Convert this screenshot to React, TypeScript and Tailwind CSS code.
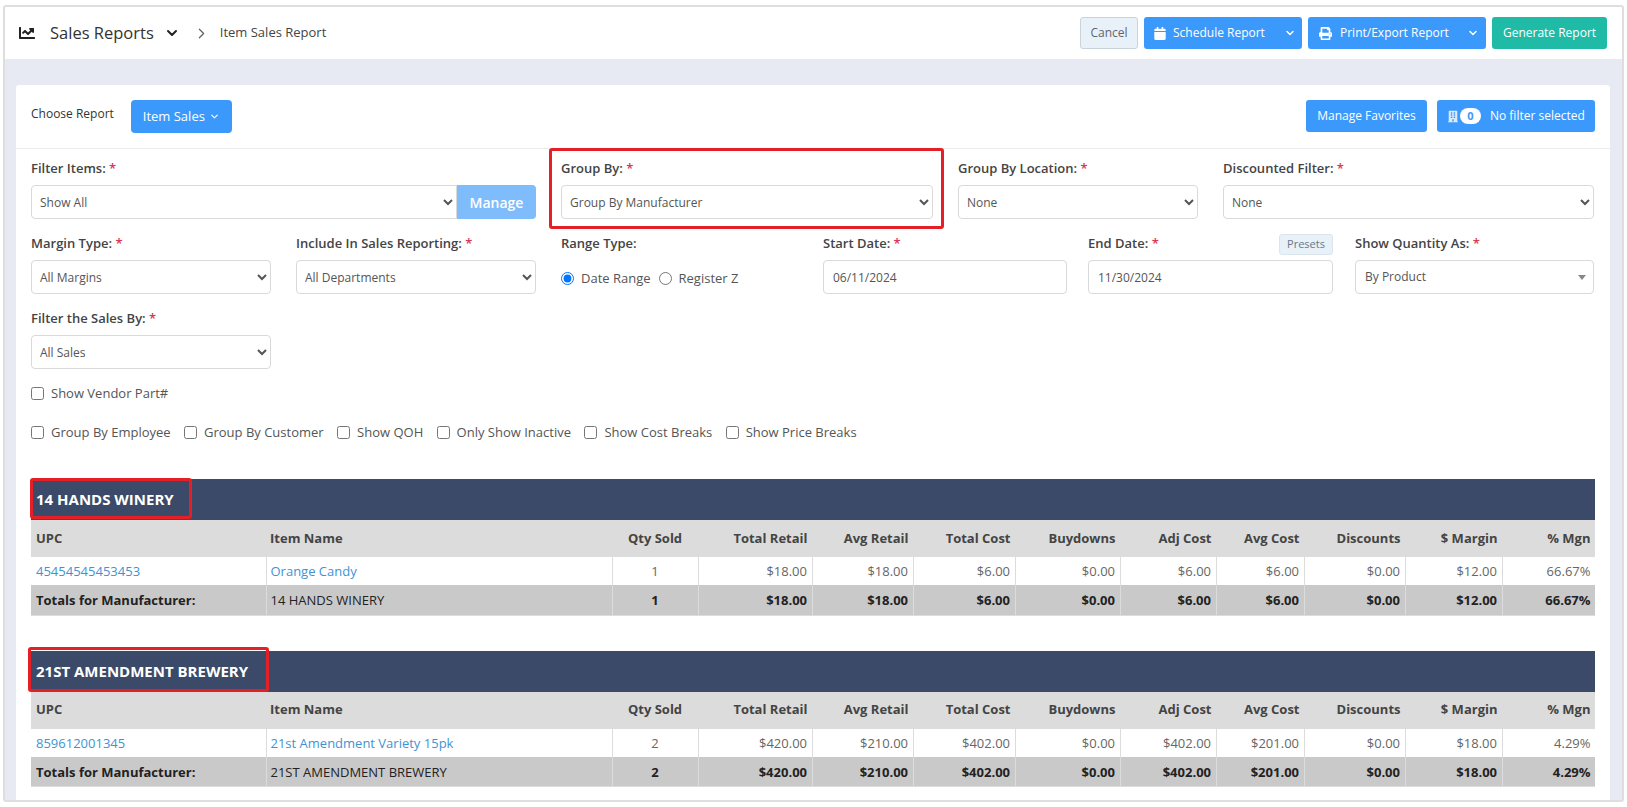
import { ChevronDown, ChevronRight } from "lucide-react";
import { FaBuilding, FaCalendar, FaChartLine, FaPrint } from "react-icons/fa";

const Req = () => <span className="text-[#d9384f]"> *</span>;

function Label({ text, req = true }: { text: string; req?: boolean }) {
  return (
    <div className="mb-[8px] h-[18px] text-[13px] leading-[18px] font-semibold text-[#444]">
      {text}:{req && <Req />}
    </div>
  );
}

function Sel({ value, extra = "rounded-[4px]" }: { value: string; extra?: string }) {
  return (
    <select
      defaultValue={value}
      className={`h-[34px] w-full border border-[#d9d9d9] bg-white pl-[4px] text-[12px] text-[#555] ${extra}`}
    >
      <option>{value}</option>
    </select>
  );
}

function Field({ label, value, req = true }: { label: string; value: string; req?: boolean }) {
  return (
    <div>
      <Label text={label} req={req} />
      <Sel value={value} />
    </div>
  );
}

function DateField({ label, value, presets }: { label: string; value: string; presets?: boolean }) {
  return (
    <div>
      <div className="flex items-start justify-between">
        <Label text={label} />
        {presets && (
          <button className="h-[21px] w-[54px] rounded-[3px] border border-[#dbe5ee] bg-[#e9f1f8] text-[11px] text-[#66788a]">
            Presets
          </button>
        )}
      </div>
      <input
        defaultValue={value}
        className="h-[34px] w-full rounded-[4px] border border-[#d9d9d9] bg-white pl-[9px] text-[12px] text-[#555]"
      />
    </div>
  );
}

function Check({ text }: { text: string }) {
  return (
    <label className="flex items-center gap-[7px] text-[13px] leading-[18px] text-[#555]">
      <input type="checkbox" className="m-0 h-[13px] w-[13px]" />
      {text}
    </label>
  );
}

const heads = ["Total Retail", "Avg Retail", "Total Cost", "Buydowns", "Adj Cost", "Avg Cost", "Discounts", "$ Margin", "% Mgn"];

interface Group {
  name: string;
  upc: string;
  item: string;
  qty: string;
  vals: string[];
  boxClass: string;
}

const groups: Group[] = [
  {
    name: "14 HANDS WINERY",
    upc: "45454545453453",
    item: "Orange Candy",
    qty: "1",
    vals: ["$18.00", "$18.00", "$6.00", "$0.00", "$6.00", "$6.00", "$0.00", "$12.00", "66.67%"],
    boxClass: "-left-[1px] -top-[1px] h-[41px] w-[162px]",
  },
  {
    name: "21ST AMENDMENT BREWERY",
    upc: "859612001345",
    item: "21st Amendment Variety 15pk",
    qty: "2",
    vals: ["$420.00", "$210.00", "$402.00", "$0.00", "$402.00", "$201.00", "$0.00", "$18.00", "4.29%"],
    boxClass: "-left-[3px] -top-[4px] h-[45px] w-[241px]",
  },
];

function Report({ g }: { g: Group }) {
  return (
    <div className="mb-[35px]">
      <div className="relative flex h-[41px] items-center bg-[#3b4a68] pl-[5px] text-[15px] font-bold text-white">
        {g.name}
        <div className={`absolute rounded-[3px] border-[3px] border-[#e41f26] ${g.boxClass}`} />
      </div>
      <table className="w-full table-fixed border-collapse text-[13px]">
        <colgroup>
          <col className="w-[235px]" />
          <col className="w-[346px]" />
          <col className="w-[86px]" />
          <col className="w-[114px]" />
          <col className="w-[101px]" />
          <col className="w-[102px]" />
          <col className="w-[105px]" />
          <col className="w-[96px]" />
          <col className="w-[88px]" />
          <col className="w-[101px]" />
          <col className="w-[97px]" />
          <col className="w-[93px]" />
        </colgroup>
        <thead>
          <tr className="h-[37px] bg-[#dcdcdc] font-semibold text-[#444]">
            <th className="pl-[5px] text-left font-bold">UPC</th>
            <th className="pl-[4px] text-left font-bold">Item Name</th>
            <th className="text-center font-bold">Qty Sold</th>
            {heads.map((h) => (
              <th key={h} className="pr-[4.5px] text-right font-bold">
                {h}
              </th>
            ))}
          </tr>
        </thead>
        <tbody>
          <tr className="h-[28px] bg-white text-[#666]">
            <td className="border-r border-[#dcdcdc] pt-[2px] pl-[5px] text-[#3f93d3]">{g.upc}</td>
            <td className="border-r border-[#dcdcdc] pt-[2px] pl-[4px] text-[#3f93d3]">{g.item}</td>
            <td className="border-r border-[#dcdcdc] pt-[2px] text-center">{g.qty}</td>
            {g.vals.map((v, i) => (
              <td key={i} className="border-r border-[#dcdcdc] pt-[2px] pr-[4.5px] text-right last:border-r-0">
                {v}
              </td>
            ))}
          </tr>
          <tr className="h-[30px] border-b border-[#dcdcdc] bg-[#c9c9c9] text-[#222]">
            <td className="border-r border-[#dcdcdc] pt-[2px] pl-[5px] font-bold">Totals for Manufacturer:</td>
            <td className="border-r border-[#dcdcdc] pt-[2px] pl-[4px]">{g.name}</td>
            <td className="border-r border-[#dcdcdc] pt-[2px] text-center font-bold">{g.qty}</td>
            {g.vals.map((v, i) => (
              <td key={i} className="border-r border-[#dcdcdc] pt-[2px] pr-[4.5px] text-right font-bold last:border-r-0">
                {v}
              </td>
            ))}
          </tr>
        </tbody>
      </table>
    </div>
  );
}

export default function App() {
  return (
    <div className="h-[807px] overflow-hidden bg-white pt-[5px] pr-[3px] pl-[3px] font-['Open_Sans',sans-serif]">
      <div className="h-[797px] overflow-hidden rounded-[3px] border-2 border-[#dedede] bg-[#e7eaf3]">
        {/* Top bar */}
        <div className="flex h-[52px] items-center bg-white pr-[15px] pl-[14px] text-[#333]">
          <FaChartLine className="h-[16px] w-[16px] text-[#222]" />
          <span className="ml-[15px] text-[16.5px] leading-[24px] text-[#333]">Sales Reports</span>
          <ChevronDown className="ml-[10px] h-[16px] w-[16px] text-[#222]" strokeWidth={3} />
          <ChevronRight className="ml-[13px] h-[17px] w-[17px] text-[#666]" strokeWidth={1.8} />
          <span className="ml-[10px] text-[13px] text-[#444]">Item Sales Report</span>
          <div className="ml-auto flex h-[32px] gap-[6px] text-[12px]">
            <button className="w-[58px] rounded-[3px] border border-[#c9d3dc] bg-[#e9f1f8] text-[#5a6672]">Cancel</button>
            <button className="flex w-[158px] items-center rounded-[3px] bg-[#3b99fc] pl-[10px] text-white">
              <FaCalendar className="h-[13px] w-[12px]" />
              <span className="ml-[7px]">Schedule Report</span>
              <ChevronDown className="ml-auto mr-[6px] h-[12px] w-[12px]" strokeWidth={3} />
            </button>
            <button className="flex w-[178px] items-center rounded-[3px] bg-[#3b99fc] pl-[11px] text-white">
              <FaPrint className="h-[13px] w-[13px]" />
              <span className="ml-[8px]">Print/Export Report</span>
              <ChevronDown className="ml-auto mr-[7px] h-[12px] w-[12px]" strokeWidth={3} />
            </button>
            <button className="w-[115px] rounded-[3px] bg-[#1fbba6] text-white">Generate Report</button>
          </div>
        </div>

        {/* Card */}
        <div className="mt-[26px] ml-[11px] h-[720px] w-[1594px] rounded-t-[3px] bg-white">
          <div className="flex h-[64px] items-start border-b border-[#ececec] pt-[15px] pr-[15px] pl-[15px]">
            <span className="mt-[5px] text-[12px] leading-[18px] font-medium text-[#333]">Choose Report</span>
            <button className="ml-[17px] flex h-[33px] w-[101px] items-center justify-center gap-[4px] rounded-[4px] bg-[#3b99fc] text-[13px] text-white">
              Item Sales
              <ChevronDown className="h-[11px] w-[11px]" strokeWidth={2.5} />
            </button>
            <button className="ml-auto h-[32px] w-[121px] rounded-[3px] bg-[#3b99fc] text-[12px] text-white">
              Manage Favorites
            </button>
            <button className="ml-[10px] flex h-[32px] w-[158px] items-center rounded-[3px] bg-[#3b99fc] pl-[11px] text-[12px] text-white">
              <FaBuilding className="h-[13px] w-[10px] text-[#dce9f7]" />
              <span className="ml-[2px] flex h-[16px] w-[21px] items-center justify-center rounded-full bg-white text-[11px] font-bold text-[#3b99fc]">
                0
              </span>
              <span className="ml-[9px]">No filter selected</span>
            </button>
          </div>

          <div className="pt-[10px] pr-[15px] pl-[15px]">
            {/* Row 1 */}
            <div className="grid grid-cols-[505px_372px_240px_371px] gap-x-[25px]">
              <div>
                <Label text="Filter Items" />
                <div className="flex">
                  <Sel value="Show All" extra="rounded-l-[4px] flex-1 min-w-0" />
                  <button className="w-[79px] shrink-0 rounded-r-[4px] bg-[#7fbcfb] text-[14px] font-semibold text-white">
                    Manage
                  </button>
                </div>
              </div>
              <div className="relative">
                <Label text="Group By" />
                <Sel value="Group By Manufacturer" />
                <div className="absolute -top-[11px] -right-[11px] -bottom-[10px] -left-[12px] rounded-[3px] border-[3px] border-[#e41f26]" />
              </div>
              <Field label="Group By Location" value="None" />
              <Field label="Discounted Filter" value="None" />
            </div>

            {/* Row 2 */}
            <div className="mt-[15px] flex">
              <div className="w-[240px]">
                <Field label="Margin Type" value="All Margins" />
              </div>
              <div className="ml-[25px] w-[240px]">
                <Field label="Include In Sales Reporting" value="All Departments" />
              </div>
              <div className="ml-[25px] w-[237px]">
                <Label text="Range Type" req={false} />
                <div className="mt-[17px] flex items-center text-[13px] leading-[18px] text-[#555]">
                  <input type="radio" name="range" defaultChecked className="m-0 h-[13px] w-[13px]" />
                  <span className="ml-[7px]">Date Range</span>
                  <input type="radio" name="range" className="m-0 ml-[8px] h-[13px] w-[13px]" />
                  <span className="ml-[7px]">Register Z</span>
                </div>
              </div>
              <div className="ml-[25px] w-[244px]">
                <DateField label="Start Date" value="06/11/2024" />
              </div>
              <div className="ml-[21px] w-[245px]">
                <DateField label="End Date" value="11/30/2024" presets />
              </div>
              <div className="ml-[22px] w-[239px]">
                <Label text="Show Quantity As" />
                <div className="flex h-[34px] items-center justify-between rounded-[4px] border border-[#d9d9d9] bg-white pr-[7px] pl-[9px] text-[12px] text-[#555]">
                  By Product
                  <span className="h-0 w-0 border-x-[4px] border-t-[5px] border-x-transparent border-t-[#888]" />
                </div>
              </div>
            </div>

            {/* Row 3 */}
            <div className="mt-[15px] w-[240px]">
              <Field label="Filter the Sales By" value="All Sales" />
            </div>

            <div className="mt-[15px]">
              <Check text="Show Vendor Part#" />
            </div>
            <div className="mt-[21px] flex gap-[13.4px]">
              <Check text="Group By Employee" />
              <Check text="Group By Customer" />
              <Check text="Show QOH" />
              <Check text="Only Show Inactive" />
              <Check text="Show Cost Breaks" />
              <Check text="Show Price Breaks" />
            </div>

            {/* Reports */}
            <div className="mt-[38px]">
              {groups.map((g) => (
                <Report key={g.name} g={g} />
              ))}
            </div>
          </div>
        </div>
      </div>
    </div>
  );
}
